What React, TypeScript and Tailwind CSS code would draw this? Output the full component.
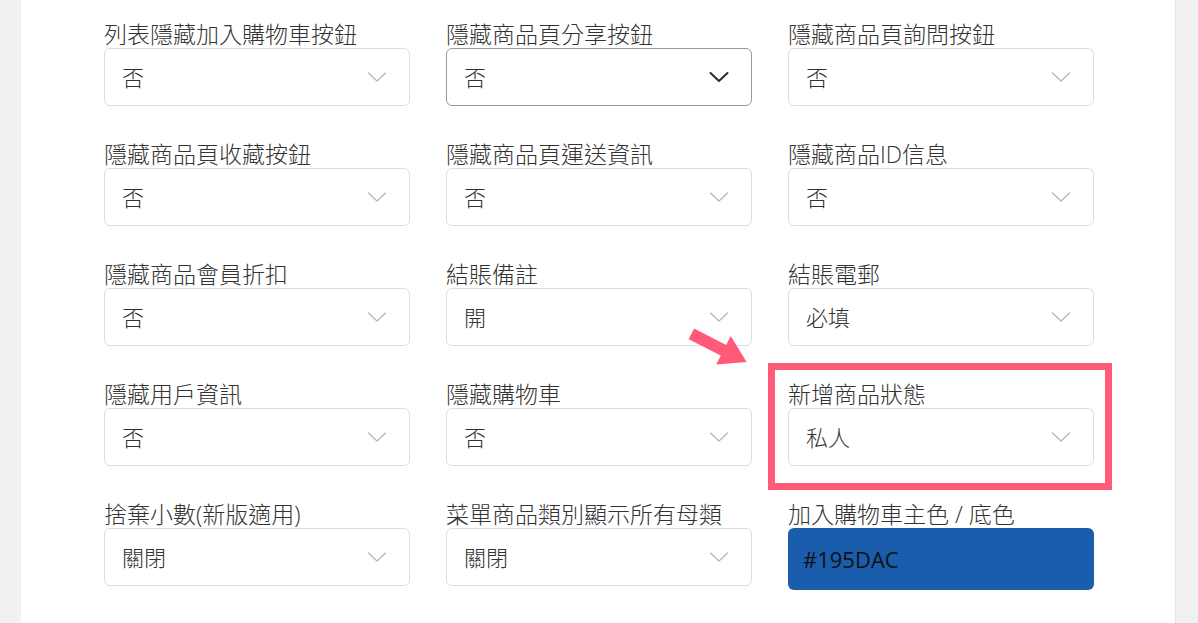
import type { ReactNode } from 'react';

type Field = {
  label: string;
  value: string;
  active?: boolean;
  highlight?: boolean;
  color?: string;
};

const FIELDS: Field[] = [
  { label: '列表隱藏加入購物車按鈕', value: '否' },
  { label: '隱藏商品頁分享按鈕', value: '否', active: true },
  { label: '隱藏商品頁詢問按鈕', value: '否' },
  { label: '隱藏商品頁收藏按鈕', value: '否' },
  { label: '隱藏商品頁運送資訊', value: '否' },
  { label: '隱藏商品ID信息', value: '否' },
  { label: '隱藏商品會員折扣', value: '否' },
  { label: '結賬備註', value: '開' },
  { label: '結賬電郵', value: '必填' },
  { label: '隱藏用戶資訊', value: '否' },
  { label: '隱藏購物車', value: '否' },
  { label: '新增商品狀態', value: '私人', highlight: true },
  { label: '捨棄小數(新版適用)', value: '關閉' },
  { label: '菜單商品類別顯示所有母類', value: '關閉' },
  { label: '加入購物車主色 / 底色', value: '#195DAC', color: '#195DAC' },
];

function Chevron({ active }: { active?: boolean }) {
  return (
    <svg
      width="20"
      height="12"
      viewBox="0 0 20 12"
      fill="none"
      stroke={active ? '#2b2b2b' : '#b9b9b9'}
      strokeWidth={active ? 2 : 1.4}
      strokeLinecap="round"
      strokeLinejoin="round"
    >
      <path d="M1.5 2 L10 10 L18.5 2" />
    </svg>
  );
}

function Select({ value, active }: { value: string; active?: boolean }) {
  return (
    <div
      className={
        'flex h-[58px] items-center justify-between rounded-[6px] border bg-white pl-[17px] pr-[22px] ' +
        (active ? 'border-[#9a9a9a]' : 'border-[#dedede]')
      }
    >
      <span className="text-[22px] font-light text-[#333]">{value}</span>
      <Chevron active={active} />
    </div>
  );
}

function ColorInput({ value, color }: { value: string; color: string }) {
  return (
    <div
      className="flex h-[62px] items-center rounded-[6px] pl-[15px]"
      style={{ backgroundColor: color }}
    >
      <span className="text-[22px] text-[#111]">{value}</span>
    </div>
  );
}

function FieldBlock({ field }: { field: Field }) {
  let body: ReactNode;
  if (field.color) body = <ColorInput value={field.value} color={field.color} />;
  else body = <Select value={field.value} active={field.active} />;

  return (
    <div className="relative">
      {field.highlight && (
        <>
          <div className="pointer-events-none absolute -left-[20px] -right-[18px] -top-[17px] -bottom-[24px] border-[7px] border-[#ff5b78]" />
          {/* pink pointer arrow */}
          <svg
            className="pointer-events-none absolute -left-[102px] -top-[58px]"
            width="66"
            height="52"
            viewBox="0 0 66 52"
          >
            <g transform="rotate(27 33 26)">
              <rect x="2" y="20" width="42" height="12" fill="#ff5b78" />
              <polygon points="38,10 64,26 38,42" fill="#ff5b78" />
            </g>
          </svg>
        </>
      )}
      <label className="block h-[28px] whitespace-nowrap text-[23px] font-light leading-[28px] text-[#333]">
        {field.label}
      </label>
      {body}
    </div>
  );
}

export default function App() {
  return (
    <div
      className="flex min-h-[623px] bg-[#f1f1f1]"
      style={{ fontFamily: '"Open Sans", "Noto Sans CJK TC", sans-serif' }}
    >
      <main className="ml-[21px] w-[1155px] border-r border-[#e6e6e6] bg-white pl-[83px] pt-[20px]">
        <div className="grid w-[990px] grid-cols-3 gap-x-[36px] gap-y-[34px]">
          {FIELDS.map((f) => (
            <FieldBlock key={f.label} field={f} />
          ))}
        </div>
      </main>
    </div>
  );
}
